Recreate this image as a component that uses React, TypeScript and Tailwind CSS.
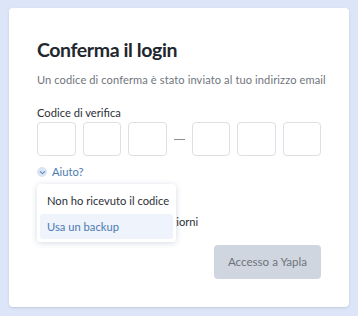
import { useState } from "react";

const FONT = { fontFamily: "Lato, 'Noto Sans', sans-serif" };

function CodeBox() {
  return <input className="h-[34px] w-[38.5px] rounded-[4px] border border-[#dcdfe4] bg-white outline-none" />;
}

export default function App() {
  const [open] = useState(true);

  return (
    <div className="min-h-[316px] w-full bg-[#dde6f8] px-[9px] pt-[8px] pb-[9px]" style={FONT}>
      <div className="relative h-[299px] rounded-[4px] bg-white px-[28px] pt-[27px] shadow-sm">
        <h1 className="text-[19.5px] font-bold leading-[30px] tracking-[-0.4px] text-[#22262e]">Conferma il login</h1>
        <p className="mt-[7px] whitespace-nowrap text-[11.1px] leading-[16px] tracking-[0.1px] text-[#70757d]">
          Un codice di conferma è stato inviato al tuo indirizzo email
        </p>

        <label className="mt-[17px] block text-[11.2px] leading-[16px] text-[#2c3038]">Codice di verifica</label>
        <div className="mt-[1px] flex items-center justify-between">
          <CodeBox />
          <CodeBox />
          <CodeBox />
          <span className="h-px w-[11px] bg-[#8a8f96]" />
          <CodeBox />
          <CodeBox />
          <CodeBox />
        </div>

        <button type="button" className="mt-[8px] flex items-center gap-[5px] text-[11.2px] leading-[16px] text-[#4b7bb0]">
          <span className="flex h-[10px] w-[10px] items-center justify-center rounded-full bg-[#dbe5f4]">
            <svg viewBox="0 0 10 10" className="h-[9px] w-[9px]" fill="none" stroke="#6b8fc0" strokeWidth="1.2">
              <path d="M2.4 3.9 5 6.3l2.6-2.4" strokeLinecap="round" strokeLinejoin="round" />
            </svg>
          </span>
          Aiuto?
        </button>

        <div className="mt-[34px] flex items-center gap-[7px] text-[11.2px] leading-[16px] text-[#2c3038]">
          <span className="h-[13px] w-[13px] rounded-[3px] border border-[#c9ced6]" />
          Resta connesso per 30 giorni
        </div>

        <div className="mt-[15px] flex justify-end">
          <button
            type="button"
            disabled
            className="h-[34px] w-[107px] rounded-[4px] bg-[#d0d6df] text-[11.6px] text-[#6e747c]"
          >
            Accesso a Yapla
          </button>
        </div>

        {open && (
          <div className="absolute left-[28px] top-[176px] w-[139px] rounded-[4px] bg-white p-[3px] shadow-[0_1px_6px_rgba(30,50,90,0.18)]">
            <div className="whitespace-nowrap px-[7px] py-[5.5px] text-[11.2px] leading-[16px] text-[#2c3038]">
              Non ho ricevuto il codice
            </div>
            <div className="rounded-[3px] bg-[#eef3fc] px-[7px] py-[4.5px] text-[11.2px] leading-[16px] text-[#4b7bb0]">
              Usa un backup
            </div>
          </div>
        )}
      </div>
    </div>
  );
}
